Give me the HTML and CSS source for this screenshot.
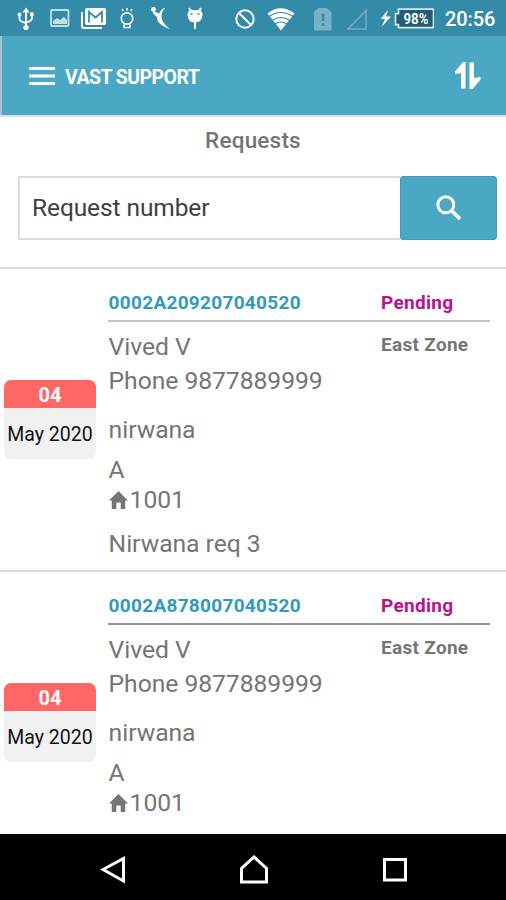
FILE: index.html
```html
<!DOCTYPE html>
<html lang="en">
<head>
<meta charset="utf-8">
<title>Vast Support</title>
<link rel="stylesheet" href="styles.css">
</head>
<body>
<div class="status">
  <svg class="status-icons" width="380" height="36" viewBox="0 0 380 36" fill="none" stroke="#fff" stroke-width="1.8">
    <g stroke-width="1.8"><path d="M26 11V27M19.500 14v5q0 2.500 6.500 4M32 14v4q0 3-6 4.500"/><path d="M22.500 12.500l3.500-5 3.500 5z" fill="#fff" stroke="none"/><circle cx="26" cy="27.500" r="2.600" fill="#fff" stroke="none"/><circle cx="19.500" cy="14.500" r="1.900" fill="#fff" stroke="none"/><path d="M30 12.500h3.600V16H30z" fill="#fff" stroke="none"/></g>
    <g opacity=".72"><rect x="51" y="10" width="17.500" height="16" rx="1"/><path d="M53 24v-3l4-3 3 2 4-3 3 3v4z" fill="#fff" stroke="none"/></g>
    <path d="M82 12v14q0 2 2 2h18" stroke-width="2"/><rect x="85" y="8" width="21" height="17" rx="2" fill="#fff" stroke="none"/><path d="M89 22.500V12l6.500 5.500L102 12v10.500" stroke="#348ba8" stroke-width="1.800"/>
    <g opacity=".9" stroke-width="1.700"><circle cx="127" cy="18.500" r="5.700"/><path d="M124 24.500v3h6v-3M127 8v2.500M122 9l1.200 2M132 9l-1.200 2"/></g>
    <circle cx="153.500" cy="9.500" r="2.400" fill="#fff" stroke="none"/><path d="M165.500 7.500c-2 .5-5 3-6.500 6l-5.500-2.500-.5 2.500 4 3.500c-.5 5 5 9.500 13 12-5-4-8.500-8-8.500-12.500 0-4 1.500-6.500 4-9z" fill="#fff" stroke="none"/>
    <path d="M187.500 15q0-5 4.500-5h6q4.500 0 4.500 5-.5 7.500-7.500 7.500t-7.500-7.500z" fill="#fff" stroke="none"/><path d="M189 8l2 3M201 8l-2 3M195 21v8" stroke-width="2"/><path d="M190.500 14h2M197.500 14h2" stroke="#348ba8" stroke-width="1.300"/>
    <circle cx="245" cy="19" r="8.700" stroke-width="2"/><path d="M239 13l12 12" stroke-width="2"/>
    <path d="M267.500 13.500q13-10.500 27 0L281 30.500z" fill="#fff" stroke="none"/><path d="M269 16.500q12-8 24 0M272 20.500q9-6 18 0M275 24q6-4 12 0" stroke="#348ba8" stroke-width="1.200"/>
    <path d="M318 8.500h9l4 4V30h-16.500V12z" fill="#77b1c5" stroke="#77b1c5" stroke-width="1"/><path d="M323 13.500v7.500M323 23.200v2.800" stroke="#348ba8" stroke-width="2.600"/>
    <path d="M366 10.500v18.500h-18z" stroke="#70acc0" stroke-width="1.600"/>
  </svg>
  <svg class="battery" width="54" height="22" viewBox="380 7 54 22">
    <path d="M388 10l-7.500 9h4.500l-3.500 8 9.500-10.500h-5z" fill="#fff"/>
    <path d="M398.500 9.200h35v18.500h-35v-3h-3v-11h3z" fill="#235d71" stroke="#d5e7ed" stroke-width="1.700"/>
    <text x="403.500" y="23.500" textLength="25" lengthAdjust="spacingAndGlyphs">98%</text>
  </svg>
  <span class="clock">20:56</span>
</div>
<header class="appbar">
  <svg width="26" height="18" viewBox="0 0 26 18" stroke="#fff" stroke-width="3"><path d="M0 1.500h26M0 9h26M0 16.500h26"/></svg>
  <h1>VAST SUPPORT</h1>
  <svg class="sort" width="27" height="27" viewBox="0 0 27 27" fill="#fff"><path d="M11.500 0V26.500H7V11L1 12V9.500L9 0zM15.500 0.500H20V16L26.500 15V17.500L18.500 27H15.500z"/></svg>
</header>
<main>
  <h2>Requests</h2>
  <div class="search">
    <div class="field">Request number</div>
    <div class="go"><svg width="26" height="26" viewBox="0 0 26 26" fill="none" stroke="#fff"><circle cx="9.800" cy="9.800" r="8" stroke-width="3"/><path d="M15.500 15.500l8.500 8.500" stroke-width="3.800"/></svg></div>
  </div>
  <article class="card">
    <div class="date"><b>04</b><span>May 2020</span></div>
    <div class="body">
      <div class="head"><span class="num">0002A209207040520</span><span class="state">Pending</span></div>
      <div class="info">
        <div class="lines"><p>Vived V</p><p>Phone 9877889999</p><p class="place">nirwana</p><p class="block">A</p><p class="home"><svg width="19" height="18" viewBox="0 0 19 18" fill="#757575"><path d="M9.500 0L19 9.500H16.200V18H11.700V11.500H7.300V18H2.800V9.500H0z"/></svg>1001</p><p class="note">Nirwana req 3</p></div>
        <span class="zone">East Zone</span>
      </div>
    </div>
  </article>
  <article class="card dark">
    <div class="date"><b>04</b><span>May 2020</span></div>
    <div class="body">
      <div class="head"><span class="num">0002A878007040520</span><span class="state">Pending</span></div>
      <div class="info">
        <div class="lines"><p>Vived V</p><p>Phone 9877889999</p><p class="place">nirwana</p><p class="block">A</p><p class="home"><svg width="19" height="18" viewBox="0 0 19 18" fill="#757575"><path d="M9.500 0L19 9.500H16.200V18H11.700V11.500H7.300V18H2.800V9.500H0z"/></svg>1001</p></div>
        <span class="zone">East Zone</span>
      </div>
    </div>
  </article>
</main>
<nav>
  <svg width="26" height="30" viewBox="0 0 26 30"><path d="M23.500 3.500v22.500L3 14.500z"/></svg>
  <svg width="30" height="30" viewBox="0 0 30 30"><path d="M2.500 27V13.500L15 2l12.500 11.500V27z"/></svg>
  <svg width="26" height="30" viewBox="0 0 26 30"><path d="M2.500 4.500h21v20.500h-21z"/></svg>
</nav>
</body>
</html>
```
FILE: styles.css
```css
* { box-sizing: border-box; }
body { margin: 0; width: 506px; height: 900px; overflow: hidden; display: flex; flex-direction: column; font-family: Roboto, sans-serif; background: #fefefe; color: #757575; }
h1, h2, p { margin: 0; }
svg { display: block; flex: none; }
.status { height: 36px; flex: none; display: flex; align-items: center; background: #348ba8; color: #fff; }
.battery { font-size: 14px; font-weight: 700; fill: #fff; }
.clock { margin-left: 11px; font-size: 20px; font-weight: 500; letter-spacing: -0.1px; line-height: 36px; padding-top: 2px; }
.appbar { height: 79px; flex: none; display: flex; align-items: center; padding: 0 25px 0 27px; background: #4ba8c5; border-left: 2px solid #a9c4cf; }
.appbar h1 { margin-left: 10px; padding-top: 5px; color: #fff; font-size: 19.500px; line-height: 24px; font-weight: 700; letter-spacing: -0.55px; }
.sort { margin-left: auto; }
main { flex: 1; min-height: 0; overflow: hidden; border-top: 2px solid #e0e0e0; }
h2 { height: 59px; padding-top: 9px; text-align: center; font-size: 22.500px; line-height: 28px; font-weight: 500; letter-spacing: .2px; }
.search { display: flex; height: 64px; margin: 0 9px 27px 18px; }
.field { flex: 1; border: 2px solid #ddd; border-right: 0; padding-left: 12px; color: #3e3e3e; font-size: 24.500px; letter-spacing: -.1px; line-height: 59px; background: #fff; }
.go { width: 97px; display: grid; place-items: center; background: #4ba8c5; border: 1px solid #3f9dbb; border-radius: 3px; }
.card { display: grid; grid-template-columns: 108px 1fr; height: 303px; border-top: 2px solid #dcdcdc; }
.date { width: 92px; height: 79px; margin: 111px 0 0 4px; border-radius: 7px; overflow: hidden; background: #f1f1f1; text-align: center; color: #111; font-size: 19.500px; }
.date b { display: block; height: 28px; line-height: 30px; background: #f66; color: #fff; font-size: 20px; }
.date span { display: block; line-height: 54px; white-space: nowrap; }
.body { padding-right: 16px; }
.head { height: 53px; padding: 22px 0 0 .6px; display: grid; grid-template-columns: 272.400px 1fr; border-bottom: 2px solid #c4c4c4; font-size: 19px; line-height: 24px; font-weight: 700; }
.dark .head { border-color: #999; }
.num { color: #329abb; letter-spacing: .3px; }
.state { color: #b9138e; letter-spacing: .3px; }
.info { display: grid; grid-template-columns: 272.400px 1fr; padding-left: .6px; }
.lines { padding-top: 8px; font-size: 24.700px; letter-spacing: -.05px; line-height: 34px; }
.place { margin-top: 15px; }
.block { margin-top: 6px; }
.home { display: flex; align-items: center; gap: 2px; line-height: 30px; margin-top: -2px; }
.note { margin-top: 12px; }
.zone { padding-top: 11px; font-size: 19px; line-height: 24px; font-weight: 700; letter-spacing: .3px; white-space: nowrap; }
nav { height: 66px; flex: none; display: flex; justify-content: center; align-items: center; gap: 113px; padding: 6px 0 0 2px; background: #000; }
nav path { fill: none; stroke: #fff; stroke-width: 3; }
```
